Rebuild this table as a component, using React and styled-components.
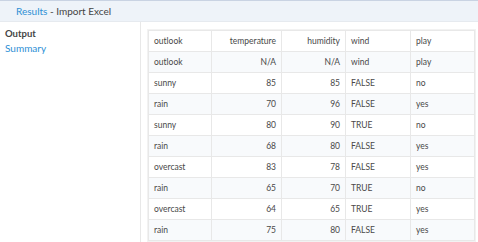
import React from 'react';
import styled, { createGlobalStyle } from 'styled-components';

const GlobalStyle = createGlobalStyle`
  html, body {
    margin: 0;
    padding: 0;
    background: #ffffff;
    font-family: Lato, "Liberation Sans", sans-serif;
  }
`

const Page = styled.div`
  width: 478px;
  height: 242px;
  overflow: hidden;
  display: flex;
  flex-direction: column;
`

// ------------------------------------

const TopBar = styled.div`
  height: 20px;
  flex: none;
  display: flex;
  align-items: center;
  padding-left: 16px;
  background: #eef3f9;
  border-top: 1px solid #c9d3e3;
  border-bottom: 1px solid #e6eaef;
  font-size: 10px;
  color: #444;
`

const Crumb = styled.span`
  color: #2d8fd5;
`

// ------------------------------------

const Body = styled.div`
  flex: 1;
  display: flex;
`

const Sidebar = styled.div`
  width: 135px;
  flex: none;
  padding: 6px 0 0 5px;
  border-right: 1px solid #e8e8e8;
  display: flex;
  flex-direction: column;
  gap: 3px;
`

const SideTitle = styled.div`
  font-size: 9.5px;
  font-weight: 700;
  color: #444;
`

const SideLink = styled.div`
  font-size: 10px;
  color: #2d8fd5;
`

// ------------------------------------

const Content = styled.div`
  flex: 1;
  padding: 8px 2px 0 7px;
`

const Table = styled.table`
  width: 327px;
  border-collapse: collapse;
  border: 1px solid #e4e4e4;
  box-shadow: 0 0 0 1px #f2f2f2;
  font-size: 8.5px;
  color: #484848;
`

const Row = styled.tr`
  height: 21px;
  background: ${p => (p.$striped ? '#f8fafc' : '#ffffff')};
`

const Cell = styled.td`
  border: 1px solid #e8e8e8;
  padding: 0 5px;
  text-align: ${p => (p.$num ? 'right' : 'left')};
  white-space: nowrap;
`

const columns = [
  { key: 'outlook', width: 63 },
  { key: 'temperature', width: 70, num: true },
  { key: 'humidity', width: 64, num: true },
  { key: 'wind', width: 65 },
  { key: 'play', width: 64 },
]

const rows = [
  ['outlook', 'N/A', 'N/A', 'wind', 'play'],
  ['sunny', '85', '85', 'FALSE', 'no'],
  ['rain', '70', '96', 'FALSE', 'yes'],
  ['sunny', '80', '90', 'TRUE', 'no'],
  ['rain', '68', '80', 'FALSE', 'yes'],
  ['overcast', '83', '78', 'FALSE', 'yes'],
  ['rain', '65', '70', 'TRUE', 'no'],
  ['overcast', '64', '65', 'TRUE', 'yes'],
  ['rain', '75', '80', 'FALSE', 'yes'],
]

const App = () => {
  return (
    <>
      <GlobalStyle />
      <Page>
        <TopBar>
          <Crumb>Results</Crumb>&nbsp;- Import Excel
        </TopBar>

        <Body>
          <Sidebar>
            <SideTitle>Output</SideTitle>
            <SideLink>Summary</SideLink>
          </Sidebar>

          <Content>
            <Table>
              <colgroup>
                {columns.map(c => <col key={c.key} style={{ width: c.width }} />)}
              </colgroup>
              <tbody>
                <Row>
                  {columns.map(c => <Cell key={c.key} $num={c.num}>{c.key}</Cell>)}
                </Row>
                {rows.map((r, i) => (
                  <Row key={i} $striped={i % 2 === 0}>
                    {r.map((v, j) => <Cell key={j} $num={columns[j].num}>{v}</Cell>)}
                  </Row>
                ))}
              </tbody>
            </Table>
          </Content>
        </Body>
      </Page>
    </>
  );
};

export default App;
